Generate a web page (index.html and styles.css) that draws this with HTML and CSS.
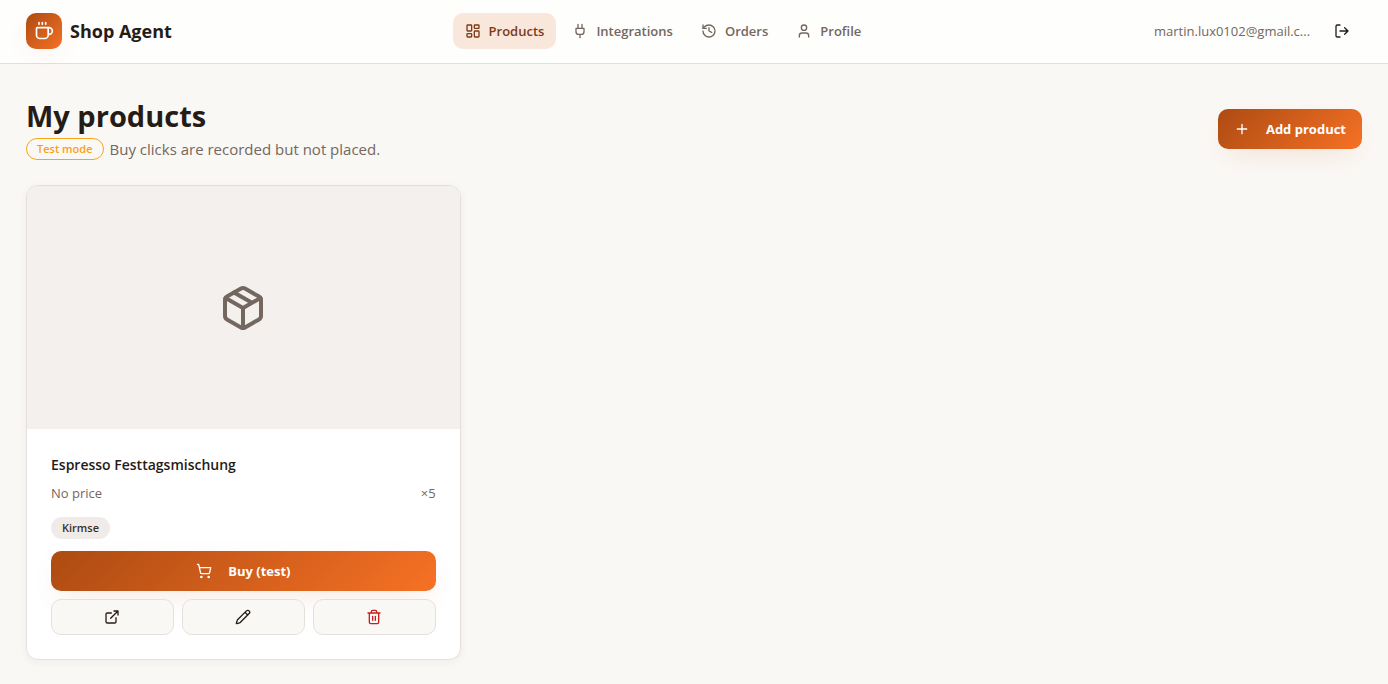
FILE: index.html
```html
<!DOCTYPE html>
<html lang="en">
<head>
    <meta charset="UTF-8">
    <meta name="viewport" content="width=device-width, initial-scale=1.0">
    <title>Shop Agent</title>
    <link rel="stylesheet" href="styles.css">
</head>
<body>
    <header class="topbar">
        <a class="brand" href="#">
            <span class="brand-logo">
                <svg class="icon-lg" viewBox="0 0 24 24"><path d="M10 2v2M14 2v2M6 2v2M16 8a1 1 0 0 1 1 1v8a4 4 0 0 1-4 4H7a4 4 0 0 1-4-4V9a1 1 0 0 1 1-1h14a4 4 0 1 1 0 8h-1"/></svg>
            </span>
            <span>Shop Agent</span>
        </a>
        <nav class="nav">
            <a class="nav-link active" href="#">
                <svg class="icon" viewBox="0 0 24 24"><rect width="7" height="9" x="3" y="3" rx="1"/><rect width="7" height="5" x="14" y="3" rx="1"/><rect width="7" height="9" x="14" y="12" rx="1"/><rect width="7" height="5" x="3" y="16" rx="1"/></svg>
                Products
            </a>
            <a class="nav-link" href="#">
                <svg class="icon" viewBox="0 0 24 24"><path d="M12 22v-5M9 8V2M15 8V2M18 8v5a4 4 0 0 1-4 4h-4a4 4 0 0 1-4-4V8Z"/></svg>
                Integrations
            </a>
            <a class="nav-link" href="#">
                <svg class="icon" viewBox="0 0 24 24"><path d="M3 12a9 9 0 1 0 9-9 9.75 9.75 0 0 0-6.74 2.74L3 8"/><path d="M3 3v5h5M12 7v5l4 2"/></svg>
                Orders
            </a>
            <a class="nav-link" href="#">
                <svg class="icon" viewBox="0 0 24 24"><path d="M19 21v-2a4 4 0 0 0-4-4H9a4 4 0 0 0-4 4v2"/><circle cx="12" cy="7" r="4"/></svg>
                Profile
            </a>
        </nav>
        <div class="account">
            <span class="account-email">martin.lux0102@gmail.c...</span>
            <button class="icon-button" type="button" aria-label="Log out">
                <svg class="icon" viewBox="0 0 24 24"><path d="m16 17 5-5-5-5M21 12H9M9 21H5a2 2 0 0 1-2-2V5a2 2 0 0 1 2-2h4"/></svg>
            </button>
        </div>
    </header>

    <main class="page">
        <div class="page-head">
            <div>
                <h1>My products</h1>
                <p class="subtitle"><span class="badge badge-warning">Test mode</span> Buy clicks are recorded but not placed.</p>
            </div>
            <button class="btn btn-primary" type="button">
                <svg class="icon" viewBox="0 0 24 24"><path d="M5 12h14M12 5v14"/></svg>
                Add product
            </button>
        </div>

        <div class="product-grid">
            <article class="card">
                <div class="card-image">
                    <svg class="icon-xl" viewBox="0 0 24 24"><path d="M11 21.73a2 2 0 0 0 2 0l7-4A2 2 0 0 0 21 16V8a2 2 0 0 0-1-1.73l-7-4a2 2 0 0 0-2 0l-7 4A2 2 0 0 0 3 8v8a2 2 0 0 0 1 1.73z"/><path d="M12 22V12M3.29 7 12 12l8.71-5M7.5 4.27l9 5.15"/></svg>
                </div>
                <div class="card-body">
                    <h2>Espresso Festtagsmischung</h2>
                    <div class="card-meta">
                        <span>No price</span>
                        <span>×5</span>
                    </div>
                    <span class="badge badge-neutral">Kirmse</span>
                    <button class="btn btn-primary btn-buy" type="button">
                        <svg class="icon" viewBox="0 0 24 24"><circle cx="8" cy="21" r="1"/><circle cx="19" cy="21" r="1"/><path d="M2.05 2.05h2l2.66 12.42a2 2 0 0 0 2 1.58h9.78a2 2 0 0 0 1.95-1.57l1.65-7.43H5.12"/></svg>
                        Buy (test)
                    </button>
                    <div class="card-actions">
                        <a class="btn btn-outline" href="#" aria-label="Open shop page">
                            <svg class="icon" viewBox="0 0 24 24"><path d="M15 3h6v6M10 14 21 3M18 13v6a2 2 0 0 1-2 2H5a2 2 0 0 1-2-2V8a2 2 0 0 1 2-2h6"/></svg>
                        </a>
                        <button class="btn btn-outline" type="button" aria-label="Edit">
                            <svg class="icon" viewBox="0 0 24 24"><path d="M21.174 6.812a1 1 0 0 0-3.986-3.987L3.842 16.174a2 2 0 0 0-.5.83l-1.321 4.352a.5.5 0 0 0 .623.622l4.353-1.32a2 2 0 0 0 .83-.497zM15 5l4 4"/></svg>
                        </button>
                        <button class="btn btn-outline btn-danger" type="button" aria-label="Delete">
                            <svg class="icon" viewBox="0 0 24 24"><path d="M3 6h18M19 6v14a2 2 0 0 1-2 2H7a2 2 0 0 1-2-2V6M8 6V4a2 2 0 0 1 2-2h4a2 2 0 0 1 2 2v2M10 11v6M14 11v6"/></svg>
                        </button>
                    </div>
                </div>
            </article>
        </div>
    </main>
</body>
</html>
```
FILE: styles.css
```css
:root {
    --bg: #faf8f5;
    --text: #261c17;
    --muted: #736760;
    --border: #e5e0dc;
    --gradient: linear-gradient(135deg, #ad4b12 0%, #f67125 100%);
    --glow: 0 10px 30px -10px rgba(194, 84, 22, 0.2);
}
* { margin: 0; padding: 0; box-sizing: border-box; }
body {
    font-family: 'Segoe UI', 'Open Sans', sans-serif;
    font-size: 15px;
    line-height: 24px;
    background: var(--bg);
    color: var(--text);
    min-height: 100vh;
}
a { color: inherit; text-decoration: none; }
button { font-family: inherit; cursor: pointer; }
svg {
    flex-shrink: 0;
    fill: none;
    stroke: currentColor;
    stroke-width: 2;
    stroke-linecap: round;
    stroke-linejoin: round;
}
.icon { width: 16px; height: 16px; }
.icon-lg { width: 20px; height: 20px; }
.icon-xl { width: 48px; height: 48px; }

.topbar {
    display: flex;
    align-items: center;
    justify-content: space-between;
    height: 64px;
    padding: 0 26px 1px;
    background: #fefefd;
    border-bottom: 1px solid #e2dfdc;
}
.brand { display: flex; align-items: center; gap: 8px; font-size: 18px; font-weight: 700; }
.brand-logo {
    display: flex;
    align-items: center;
    justify-content: center;
    width: 36px;
    height: 36px;
    border-radius: 10px;
    background: var(--gradient);
    box-shadow: var(--glow);
    color: #fff;
}
.nav { display: flex; gap: 4px; }
.nav-link {
    display: flex;
    align-items: center;
    gap: 8px;
    height: 36px;
    padding: 0 12px;
    border-radius: 10px;
    font-size: 13px;
    font-weight: 600;
    color: var(--muted);
}
.nav-link.active { background: #f9e7dc; color: #7c3a16; }
.account { display: flex; align-items: center; gap: 8px; }
.account-email {
    min-width: 160px;
    white-space: nowrap;
    font-size: 13px;
    color: var(--muted);
}
.icon-button {
    display: flex;
    padding: 10px 12px;
    border: none;
    border-radius: 10px;
    background: transparent;
    color: var(--text);
}

.page { padding: 33px 26px 24px; }
.page-head {
    display: flex;
    align-items: center;
    justify-content: space-between;
    margin-bottom: 24px;
}
h1 { font-size: 29px; font-weight: 700; line-height: 38px; margin-bottom: 2px; }
.subtitle { display: flex; align-items: center; gap: 6px; color: var(--muted); }
.badge {
    display: inline-flex;
    align-items: center;
    height: 22px;
    padding: 0 10px;
    border: 1px solid transparent;
    border-radius: 11px;
    font-size: 11px;
    font-weight: 600;
}
.badge-warning { border-color: #f8a51b; color: #f8a01b; }
.badge-neutral { background: #f0ebe8; color: #3a2e29; }

.btn {
    display: flex;
    align-items: center;
    justify-content: center;
    gap: 16px;
    height: 40px;
    padding: 0 16px;
    border: none;
    border-radius: 10px;
    font-size: 13px;
    font-weight: 700;
}
.btn-primary { background: var(--gradient); box-shadow: var(--glow); color: #fff; }
.btn-outline { height: 36px; border: 1px solid var(--border); background: var(--bg); color: var(--text); }
.btn-danger { color: #c81e1e; }

.product-grid {
    display: grid;
    grid-template-columns: repeat(auto-fill, minmax(400px, 1fr));
    gap: 16px;
}
.card {
    overflow: hidden;
    border: 1px solid var(--border);
    border-radius: 12px;
    background: #fff;
    box-shadow: 0 2px 8px rgba(38, 28, 23, 0.05);
}
.card-image {
    display: flex;
    align-items: center;
    justify-content: center;
    aspect-ratio: 16 / 9;
    background: #f4f0ed;
    color: var(--muted);
}
.card-body { padding: 24px; }
h2 { font-size: 14px; font-weight: 600; line-height: 24px; margin-bottom: 6px; }
.card-meta {
    display: flex;
    justify-content: space-between;
    margin-bottom: 14px;
    font-size: 13px;
    line-height: 20px;
    color: var(--muted);
}
.card-body .badge { display: flex; width: fit-content; }
.btn-buy { width: 100%; margin: 12px 0 8px; }
.card-actions { display: grid; grid-template-columns: repeat(3, 1fr); gap: 8px; }
```
